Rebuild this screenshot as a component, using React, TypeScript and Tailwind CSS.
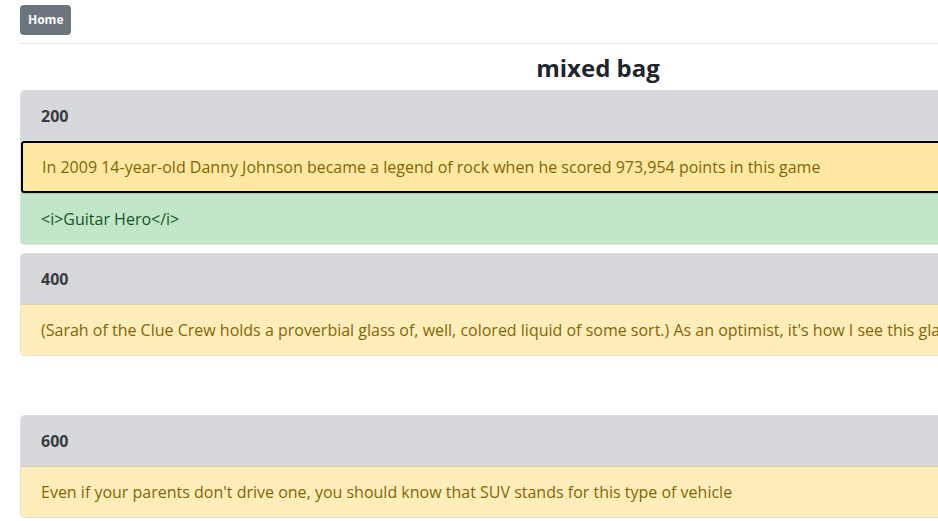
import React from 'react';

interface Clue {
  value: number;
  question: string;
  answer: string;
  showAnswer: boolean;
  active: boolean;
}

const CLUES: Clue[] = [
  {
    value: 200,
    question: 'In 2009 14-year-old Danny Johnson became a legend of rock when he scored 973,954 points in this game',
    answer: '<i>Guitar Hero</i>',
    showAnswer: true,
    active: true,
  },
  {
    value: 400,
    question:
      "(Sarah of the Clue Crew holds a proverbial glass of, well, colored liquid of some sort.) As an optimist, it's how I see this glass",
    answer: 'half full',
    showAnswer: false,
    active: false,
  },
  {
    value: 600,
    question: "Even if your parents don't drive one, you should know that SUV stands for this type of vehicle",
    answer: 'sport utility vehicle',
    showAnswer: false,
    active: false,
  },
];

const ClueCard: React.FC<{ clue: Clue }> = ({ clue }) => {
  return (
    <div className="mb-2">
      <div className="overflow-hidden rounded-[4px] border border-black/[0.125]">
        {/* Value */}
        <div className="bg-[#d6d8db] px-5 py-3 text-[16px] font-bold leading-[26px] text-[#383d41]">
          {clue.value}
        </div>

        {/* Question */}
        <div
          className={
            clue.active
              ? 'rounded-[3px] border-2 border-black bg-[#ffe8a1] px-[19px] py-[11px] text-[16px] leading-[26px] whitespace-nowrap text-[#856404]'
              : 'border-t border-black/[0.125] bg-[#ffeeba] px-5 py-3 text-[16px] leading-[26px] whitespace-nowrap text-[#856404]'
          }
        >
          {clue.question}
        </div>

        {/* Answer */}
        {clue.showAnswer && (
          <div className="border-t border-black/[0.125] bg-[#c3e6cb] px-5 py-3 text-[16px] leading-[26px] text-[#155724]">
            {clue.answer}
          </div>
        )}
      </div>
      {!clue.showAnswer && <div className="h-[51px]" />}
    </div>
  );
};

export default function App() {
  return (
    <div className="h-screen overflow-hidden bg-white font-['Open_Sans',sans-serif]">
      <div className="ml-5 w-[1156px] pt-[5px]">
        <button
          type="button"
          className="h-[30px] rounded-[4px] bg-[#6c757d] px-2 text-[12px] font-bold text-white"
        >
          Home
        </button>
        <hr className="mt-2 border-t border-black/10" />
        <h4 className="h-[46px] pt-[9px] text-center text-[24px] font-bold leading-[30px] text-[#212529]">
          mixed bag
        </h4>

        {CLUES.map((clue) => (
          <ClueCard key={clue.value} clue={clue} />
        ))}
      </div>
    </div>
  );
}
